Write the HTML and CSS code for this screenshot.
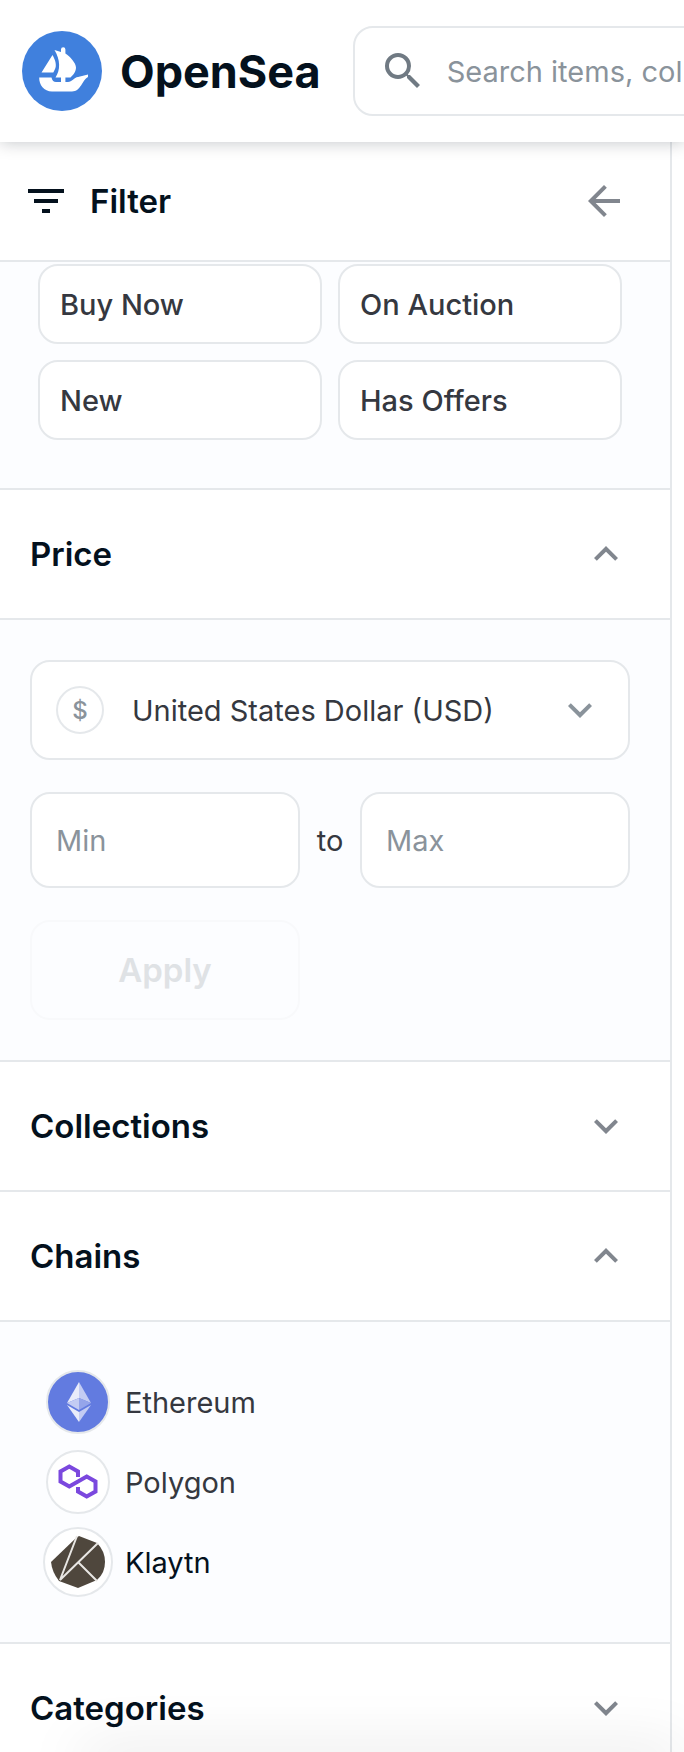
FILE: index.html
```
<!DOCTYPE html>
<html lang="en">
<head>
    <meta charset="UTF-8">
    <meta name="viewport" content="width=device-width, initial-scale=1.0">
    <title>OpenSea</title>
    <link rel="stylesheet" href="styles.css">
</head>
<body>
    <header class="navbar">
        <a href="#" class="brand">
            <svg class="logo" viewBox="0 0 80 80" aria-hidden="true">
                <circle cx="40" cy="40" r="40" fill="#4080dd"/>
                <g fill="#fff">
                    <path d="M19.500 41.500L30.500 24C33.500 29 35 35 32.800 38.500L31.300 41.500Z"/>
                    <path d="M32.500 19L39 21V18.500Q39 16.200 41.200 16.200T43.400 18.500V22.500C48 25.500 54 32 54 36.500C54 41 51 44 48.500 46.500H43.400V51H39V46.500H33.500C38.500 39 38.500 29 32.500 19Z"/>
                    <path d="M17.200 46.500H29.500Q30.500 51 34 51H46C50 51 52 46.500 56 46L66 43.500V46C60 49 59 60.500 50 60.500H30C22 60.500 17 54 17.200 46.500Z"/>
                </g>
            </svg>
            <span class="brand-name">OpenSea</span>
        </a>
        <form class="search">
            <svg class="icon" viewBox="0 0 24 24" aria-hidden="true"><path d="M15.5 14h-.79l-.28-.27A6.471 6.471 0 0 0 16 9.500 6.500 6.500 0 1 0 9.500 16c1.610 0 3.090-.59 4.230-1.570l.27.28v.79l5 4.990L20.490 19l-4.990-5zm-6 0C7.010 14 5 11.990 5 9.500S7.010 5 9.500 5 14 7.010 14 9.500 11.990 14 9.500 14z"/></svg>
            <input type="text" placeholder="Search items, collections, and accounts" aria-label="Search">
        </form>
    </header>

    <aside class="sidebar">
        <div class="filter-head">
            <svg class="icon icon-dark" viewBox="0 0 24 24" aria-hidden="true"><path d="M10 18h4v-2h-4v2zM3 6v2h18V6H3zm3 7h12v-2H6v2z"/></svg>
            <h2>Filter</h2>
            <button type="button" class="icon-button" aria-label="Close filters">
                <svg class="icon" viewBox="0 0 24 24"><path d="M20 11H7.830l5.590-5.590L12 4l-8 8 8 8 1.410-1.410L7.830 13H20v-2z"/></svg>
            </button>
        </div>

        <div class="panel status">
            <button type="button">Buy Now</button>
            <button type="button">On Auction</button>
            <button type="button">New</button>
            <button type="button">Has Offers</button>
        </div>

        <button type="button" class="section-head" aria-expanded="true">
            Price
            <svg class="icon" viewBox="0 0 24 24" aria-hidden="true"><path d="M12 8l-6 6 1.410 1.410L12 10.830l4.590 4.580L18 14z"/></svg>
        </button>
        <form class="panel price">
            <div class="currency">
                <span class="coin">$</span>
                <select aria-label="Currency">
                    <option>United States Dollar (USD)</option>
                    <option>Ether (ETH)</option>
                </select>
                <svg class="icon" viewBox="0 0 24 24" aria-hidden="true"><path d="M16.590 8.590L12 13.170 7.410 8.590 6 10l6 6 6-6z"/></svg>
            </div>
            <div class="range">
                <input type="text" placeholder="Min" aria-label="Minimum price">
                <span>to</span>
                <input type="text" placeholder="Max" aria-label="Maximum price">
                <button type="submit" class="apply" disabled>Apply</button>
            </div>
        </form>

        <button type="button" class="section-head" aria-expanded="false">
            Collections
            <svg class="icon" viewBox="0 0 24 24" aria-hidden="true"><path d="M16.590 8.590L12 13.170 7.410 8.590 6 10l6 6 6-6z"/></svg>
        </button>

        <button type="button" class="section-head" aria-expanded="true">
            Chains
            <svg class="icon" viewBox="0 0 24 24" aria-hidden="true"><path d="M12 8l-6 6 1.410 1.410L12 10.830l4.590 4.580L18 14z"/></svg>
        </button>
        <div class="panel chains">
            <button type="button" class="chain">
                <svg class="chain-icon" viewBox="0 0 70 70" aria-hidden="true">
                    <circle cx="35" cy="35" r="31" fill="#627be0" stroke="#e5e8eb" stroke-width="2"/>
                    <path d="M36 15L24 36l12-5z" fill="#e9ecfa"/>
                    <path d="M36 15l12 21-12-5z" fill="#c3ccf3"/>
                    <path d="M24 36l12-5v12z" fill="#c3ccf3"/>
                    <path d="M48 36l-12-5v12z" fill="#95a5ea"/>
                    <path d="M24 38l12 7v10z" fill="#e9ecfa"/>
                    <path d="M48 38l-12 7v10z" fill="#c3ccf3"/>
                </svg>
                Ethereum
            </button>
            <button type="button" class="chain">
                <svg class="chain-icon" viewBox="0 0 70 70" aria-hidden="true">
                    <circle cx="35" cy="35" r="31" fill="#fff" stroke="#e5e8eb" stroke-width="2"/>
                    <path d="M35 30v-5.500l-8.700-5-8.800 5v10l8.800 5L43.700 29.500l8.800 5v10l-8.800 5-8.700-5V40" fill="none" stroke="#7b48de" stroke-width="4"/>
                </svg>
                Polygon
            </button>
            <button type="button" class="chain chain-active">
                <svg class="chain-icon" viewBox="0 0 70 70" aria-hidden="true">
                    <circle cx="35" cy="35" r="34" fill="#fff" stroke="#e5e8eb" stroke-width="2"/>
                    <path d="M36 9L54 16Q62 24 62 35T54 53L35 61 16 54Q9 45 8 35L33 11Z" fill="#4f473d"/>
                    <path d="M34 9L17 53L55 16M35 35L54 54" fill="none" stroke="#e9e7e4" stroke-width="2"/>
                </svg>
                Klaytn
            </button>
        </div>

        <button type="button" class="section-head" aria-expanded="false">
            Categories
            <svg class="icon" viewBox="0 0 24 24" aria-hidden="true"><path d="M16.590 8.590L12 13.170 7.410 8.590 6 10l6 6 6-6z"/></svg>
        </button>
    </aside>

    <div class="bottom-shade"></div>
</body>
</html>
```
FILE: styles.css
```
* {
    box-sizing: border-box;
}

body {
    margin: 0;
    height: 100vh;
    overflow: hidden;
    background-color: #fff;
    color: #04111d;
    font-family: Inter, sans-serif;
    font-size: 29px;
}

button, input, select {
    font: inherit;
    color: inherit;
}

button {
    cursor: pointer;
}

.icon {
    flex: none;
    width: 48px;
    height: 48px;
    fill: #81868e;
}

.icon-dark {
    fill: #04111d;
}

.navbar {
    position: relative;
    z-index: 1;
    display: flex;
    align-items: center;
    gap: 32px;
    padding: 26px 0 26px 22px;
    background-color: #fff;
    box-shadow: 0 0 16px rgba(4, 17, 29, 0.25);
}

.brand {
    display: flex;
    align-items: center;
    gap: 18px;
    color: inherit;
    text-decoration: none;
}

.logo {
    width: 80px;
    height: 80px;
}

.brand-name {
    font-size: 45px;
    font-weight: 700;
}

.search {
    display: flex;
    flex: 1 0 600px;
    align-items: center;
    gap: 20px;
    height: 90px;
    padding: 0 24px;
    border: 2px solid #e5e8eb;
    border-radius: 20px;
}

.search .icon {
    fill: #707a83;
}

.search input {
    flex: 1;
    padding: 0;
    border: none;
    outline: none;
}

::placeholder {
    color: #8a939b;
    opacity: 1;
}

.sidebar {
    margin-right: 12px;
    border-right: 2px solid #e5e8eb;
}

.filter-head {
    display: flex;
    align-items: center;
    gap: 20px;
    height: 120px;
    padding: 0 42px 0 22px;
    border-bottom: 2px solid #e5e8eb;
}

.filter-head h2 {
    flex: 1;
    margin: 0;
    font-size: 33px;
    font-weight: 600;
}

.icon-button {
    display: flex;
    padding: 0;
    border: none;
    background: none;
}

.panel {
    background-color: #fcfdff;
    border-bottom: 2px solid #e5e8eb;
}

.status {
    display: grid;
    grid-template-columns: 1fr 1fr;
    gap: 16px;
    padding: 2px 48px 48px 38px;
}

.status button {
    height: 80px;
    padding: 0 20px;
    border: 2px solid #e5e8eb;
    border-radius: 20px;
    background-color: #fff;
    color: #353840;
    font-weight: 500;
    text-align: left;
}

.section-head {
    display: flex;
    justify-content: space-between;
    align-items: center;
    width: 100%;
    height: 130px;
    padding: 0 40px 0 30px;
    border: none;
    border-bottom: 2px solid #e5e8eb;
    background-color: #fff;
    font-size: 33px;
    font-weight: 600;
}

.price {
    padding: 40px 40px 40px 30px;
    color: #353840;
}

.currency {
    display: flex;
    align-items: center;
    height: 100px;
    margin-bottom: 32px;
    padding: 0 24px;
    border: 2px solid #e5e8eb;
    border-radius: 20px;
    background-color: #fff;
}

.currency .icon {
    fill: #8a939b;
}

.currency select {
    flex: 1;
    min-width: 0;
    margin-left: 28px;
    padding: 0;
    border: none;
    outline: none;
    background: none;
    appearance: none;
}

.coin {
    display: flex;
    justify-content: center;
    align-items: center;
    width: 48px;
    height: 48px;
    border: 2px solid #e5e8eb;
    border-radius: 50%;
    color: #8a939b;
    font-size: 24px;
    font-weight: 500;
}

.range {
    display: grid;
    grid-template-columns: 1fr 60px 1fr;
    row-gap: 32px;
    align-items: center;
    text-align: center;
}

.range input {
    width: 100%;
    height: 96px;
    padding: 0 24px;
    border: 2px solid #e5e8eb;
    border-radius: 20px;
    background-color: #fff;
}

.apply {
    height: 100px;
    border: 2px solid #f8f9fb;
    border-radius: 20px;
    background: none;
    color: #dfe2e5;
    font-size: 33px;
    font-weight: 600;
}

.chains {
    padding: 40px 43px;
}

.chain {
    display: flex;
    align-items: center;
    gap: 12px;
    width: 100%;
    height: 80px;
    padding: 0;
    border: none;
    background: none;
    color: #353840;
}

.chain-active {
    color: #04111d;
}

.chain-icon {
    width: 70px;
    height: 70px;
}

/* soft shade along the bottom edge of the window */
.bottom-shade {
    position: fixed;
    left: 80px;
    right: 0;
    bottom: -20px;
    height: 20px;
    box-shadow: 0 0 60px rgba(0, 0, 0, 0.15);
}
```
